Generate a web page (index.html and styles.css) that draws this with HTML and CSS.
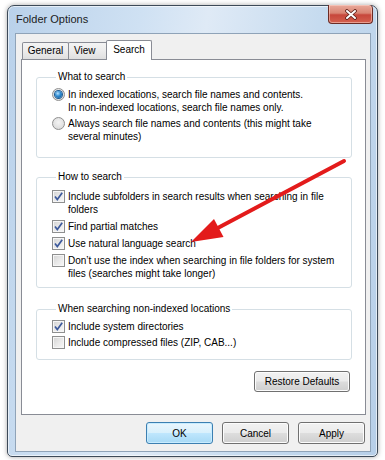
FILE: index.html
```html
<!DOCTYPE html>
<html>
<head>
<meta charset="utf-8">
<title>Folder Options</title>
<link rel="stylesheet" href="styles.css">
</head>
<body>
<div class="window">
  <div class="titlebar">
    <span class="title">Folder Options</span>
    <div class="close">
      <svg width="14" height="11" viewBox="0 0 14 11">
        <path d="M3 2 L11 9 M11 2 L3 9" stroke="#5a1f18" stroke-width="3.6" stroke-linecap="round"/>
        <path d="M3 2 L11 9 M11 2 L3 9" stroke="#ffffff" stroke-width="2" stroke-linecap="round"/>
      </svg>
    </div>
  </div>
  <div class="client">
    <div class="tabs">
      <div class="tab tab-general">General</div>
      <div class="tab tab-view">View</div>
      <div class="tab tab-selected">Search</div>
    </div>
    <div class="panel">
      <fieldset class="group group-what">
        <legend>What to search</legend>
        <div class="opt">
          <span class="radio checked"><span class="dot"></span></span>
          <span class="label narrow">In indexed locations, search file names and contents.<br>In non-indexed locations, search file names only.</span>
        </div>
        <div class="opt">
          <span class="radio"></span>
          <span class="label narrow">Always search file names and contents (this might take several minutes)</span>
        </div>
      </fieldset>

      <fieldset class="group group-how">
        <legend>How to search</legend>
        <div class="opt">
          <span class="check on"><svg width="11" height="11" viewBox="0 0 11 11"><path d="M2 5.5 L4.3 8.6 L9.2 1.8" fill="none" stroke="#3d5a9c" stroke-width="1.7"/></svg></span>
          <span class="label wide">Include subfolders in search results when searching in file folders</span>
        </div>
        <div class="opt">
          <span class="check on"><svg width="11" height="11" viewBox="0 0 11 11"><path d="M2 5.5 L4.3 8.6 L9.2 1.8" fill="none" stroke="#3d5a9c" stroke-width="1.7"/></svg></span>
          <span class="label wide">Find partial matches</span>
        </div>
        <div class="opt">
          <span class="check on"><svg width="11" height="11" viewBox="0 0 11 11"><path d="M2 5.5 L4.3 8.6 L9.2 1.8" fill="none" stroke="#3d5a9c" stroke-width="1.7"/></svg></span>
          <span class="label wide">Use natural language search</span>
        </div>
        <div class="opt">
          <span class="check"></span>
          <span class="label wide">Don’t use the index when searching in file folders for system files (searches might take longer)</span>
        </div>
      </fieldset>

      <fieldset class="group group-non">
        <legend>When searching non-indexed locations</legend>
        <div class="opt">
          <span class="check on"><svg width="11" height="11" viewBox="0 0 11 11"><path d="M2 5.5 L4.3 8.6 L9.2 1.8" fill="none" stroke="#3d5a9c" stroke-width="1.7"/></svg></span>
          <span class="label wide">Include system directories</span>
        </div>
        <div class="opt">
          <span class="check"></span>
          <span class="label wide">Include compressed files (ZIP, CAB...)</span>
        </div>
      </fieldset>

      <div class="restore-row">
        <button class="btn restore">Restore Defaults</button>
      </div>
    </div>
    <div class="buttons">
      <button class="btn default">OK</button>
      <button class="btn">Cancel</button>
      <button class="btn">Apply</button>
    </div>
  </div>
</div>
<svg class="arrow" width="385" height="460" viewBox="0 0 385 460">
  <line x1="344" y1="161" x2="214" y2="230" stroke="#e31b1b" stroke-width="4" stroke-linecap="round"/>
  <polygon points="191,242 223.5,237 214,219" fill="#e31b1b"/>
</svg>
</body>
</html>
```

FILE: styles.css
```css
html, body {
  margin: 0;
  padding: 0;
  background: #ffffff;
}

body {
  width: 385px;
  height: 460px;
  overflow: hidden;
  font-family: "Liberation Sans", Arial, sans-serif;
  font-size: 10px;
  color: #000;
}

.window {
  margin: 5px 0 0 7px;
  width: 371px;
  height: 452px;
  box-sizing: border-box;
  border: 1px solid #3d4a58;
  border-radius: 7px 7px 5px 5px;
  padding: 0 6px 4px 7px;
  display: flex;
  flex-direction: column;
  background: linear-gradient(100deg, #b9d1ea 0%, #cfe1f3 30%, #dfeaf6 45%, #c6dbef 70%, #b7cfe8 100%);
  box-shadow: 0 0 5px rgba(0, 0, 0, 0.35), inset 0 0 0 1px rgba(255, 255, 255, 0.6);
}

.titlebar {
  height: 27px;
  display: flex;
  justify-content: space-between;
  align-items: flex-start;
}

.title {
  margin: 6px 0 0 1px;
  font-size: 11px;
  line-height: 14px;
  color: #1b1b1b;
}

.close {
  margin: -1px -2px 0 0;
  width: 45px;
  height: 19px;
  box-sizing: border-box;
  border: 1px solid #6b2b24;
  border-top: none;
  border-radius: 0 4px 4px 4px;
  background: linear-gradient(#e9a99b 0%, #d98573 45%, #c7473b 55%, #d4614f 100%);
  box-shadow: inset 0 0 0 1px rgba(255, 220, 210, 0.5);
  display: flex;
  align-items: center;
  justify-content: center;
}

.client {
  flex: 1;
  border: 1px solid #8fa3b8;
  background: #f0f0f0;
  display: flex;
  flex-direction: column;
  padding: 0 4px 7px 5px;
}

.tabs {
  height: 25px;
  box-sizing: border-box;
  display: flex;
  align-items: flex-end;
  padding-left: 1px;
}

.tab {
  height: 17px;
  box-sizing: border-box;
  border: 1px solid #898c95;
  border-bottom: none;
  background: linear-gradient(#f4f4f4, #ececec 50%, #dfdfdf);
  line-height: 16px;
  text-align: center;
  border-radius: 2px 2px 0 0;
}

.tab-general {
  width: 47px;
}

.tab-view {
  width: 40px;
  margin-left: -1px;
  text-align: left;
  padding-left: 5px;
}

.tab-selected {
  width: 46px;
  height: 20px;
  margin-left: -2px;
  margin-bottom: -1px;
  background: #ffffff;
  line-height: 17px;
  position: relative;
  z-index: 1;
}

.panel {
  height: 356px;
  box-sizing: border-box;
  border: 1px solid #898c95;
  background: #ffffff;
  padding: 10px 13px 0 14px;
  display: flex;
  flex-direction: column;
}

.group {
  margin: 0;
  border: 1px solid #d5dfe5;
  border-radius: 3px;
  padding: 4px 4px 14px 15px;
  display: flex;
  flex-direction: column;
  gap: 3px;
}

.group legend {
  margin-left: 4px;
  padding: 0 2px;
  line-height: 14px;
  color: #000;
}

.group-how {
  margin-top: 12px;
  padding-top: 6px;
  padding-bottom: 7px;
  gap: 4px;
}

.group-non {
  margin-top: 14px;
  padding-top: 4px;
  padding-bottom: 10px;
  gap: 3px;
}

.opt {
  display: flex;
  align-items: flex-start;
}

.label {
  line-height: 13px;
  margin-left: 3px;
}

.narrow {
  width: 255px;
}

.wide {
  width: 272px;
}

.radio {
  flex: none;
  width: 13px;
  height: 13px;
  box-sizing: border-box;
  border: 1px solid #8f8f8f;
  border-radius: 50%;
  background: radial-gradient(circle at 50% 40%, #f4f4f4 0%, #dedede 70%, #cfcfcf 100%);
  display: flex;
  align-items: center;
  justify-content: center;
}

.radio .dot {
  width: 7px;
  height: 7px;
  border-radius: 50%;
  background: radial-gradient(circle at 40% 35%, #b8e2ff 0%, #2d8ad0 45%, #0f4f8a 100%);
  box-shadow: 0 0 0 1px #1c5a92;
}

.check {
  flex: none;
  width: 13px;
  height: 13px;
  box-sizing: border-box;
  border: 1px solid #8e8f8f;
  background: linear-gradient(135deg, #d2d2d2 0%, #e8e8e8 50%, #f8f8f8 100%);
  box-shadow: inset 0 0 0 1px #f6f6f6;
  display: flex;
  align-items: center;
  justify-content: center;
}

.check svg {
  display: block;
}

.restore-row {
  display: flex;
  justify-content: flex-end;
  margin-top: 11px;
  padding-right: 2px;
}

.btn {
  font-family: "Liberation Sans", Arial, sans-serif;
  font-size: 10px;
  color: #000;
  height: 21px;
  box-sizing: border-box;
  border: 1px solid #707070;
  border-radius: 3px;
  background: linear-gradient(#f2f2f2 0%, #ebebeb 48%, #dddddd 52%, #cfcfcf 100%);
  box-shadow: inset 0 0 0 1px #fcfcfc;
  padding: 0;
  margin: 0;
}

.restore {
  width: 96px;
}

.buttons {
  margin-top: 7px;
  display: flex;
  justify-content: flex-end;
  gap: 9px;
  padding-right: 1px;
}

.buttons .btn {
  width: 67px;
  height: 22px;
}

.btn.default {
  border-color: #3c7fb1;
  background: linear-gradient(#eaf6fd 0%, #d9f0fc 48%, #bee6fd 52%, #a7d9f5 100%);
  box-shadow: inset 0 0 0 1px #c8ecff;
}

.arrow {
  position: absolute;
  left: 0;
  top: 0;
  pointer-events: none;
}
```
